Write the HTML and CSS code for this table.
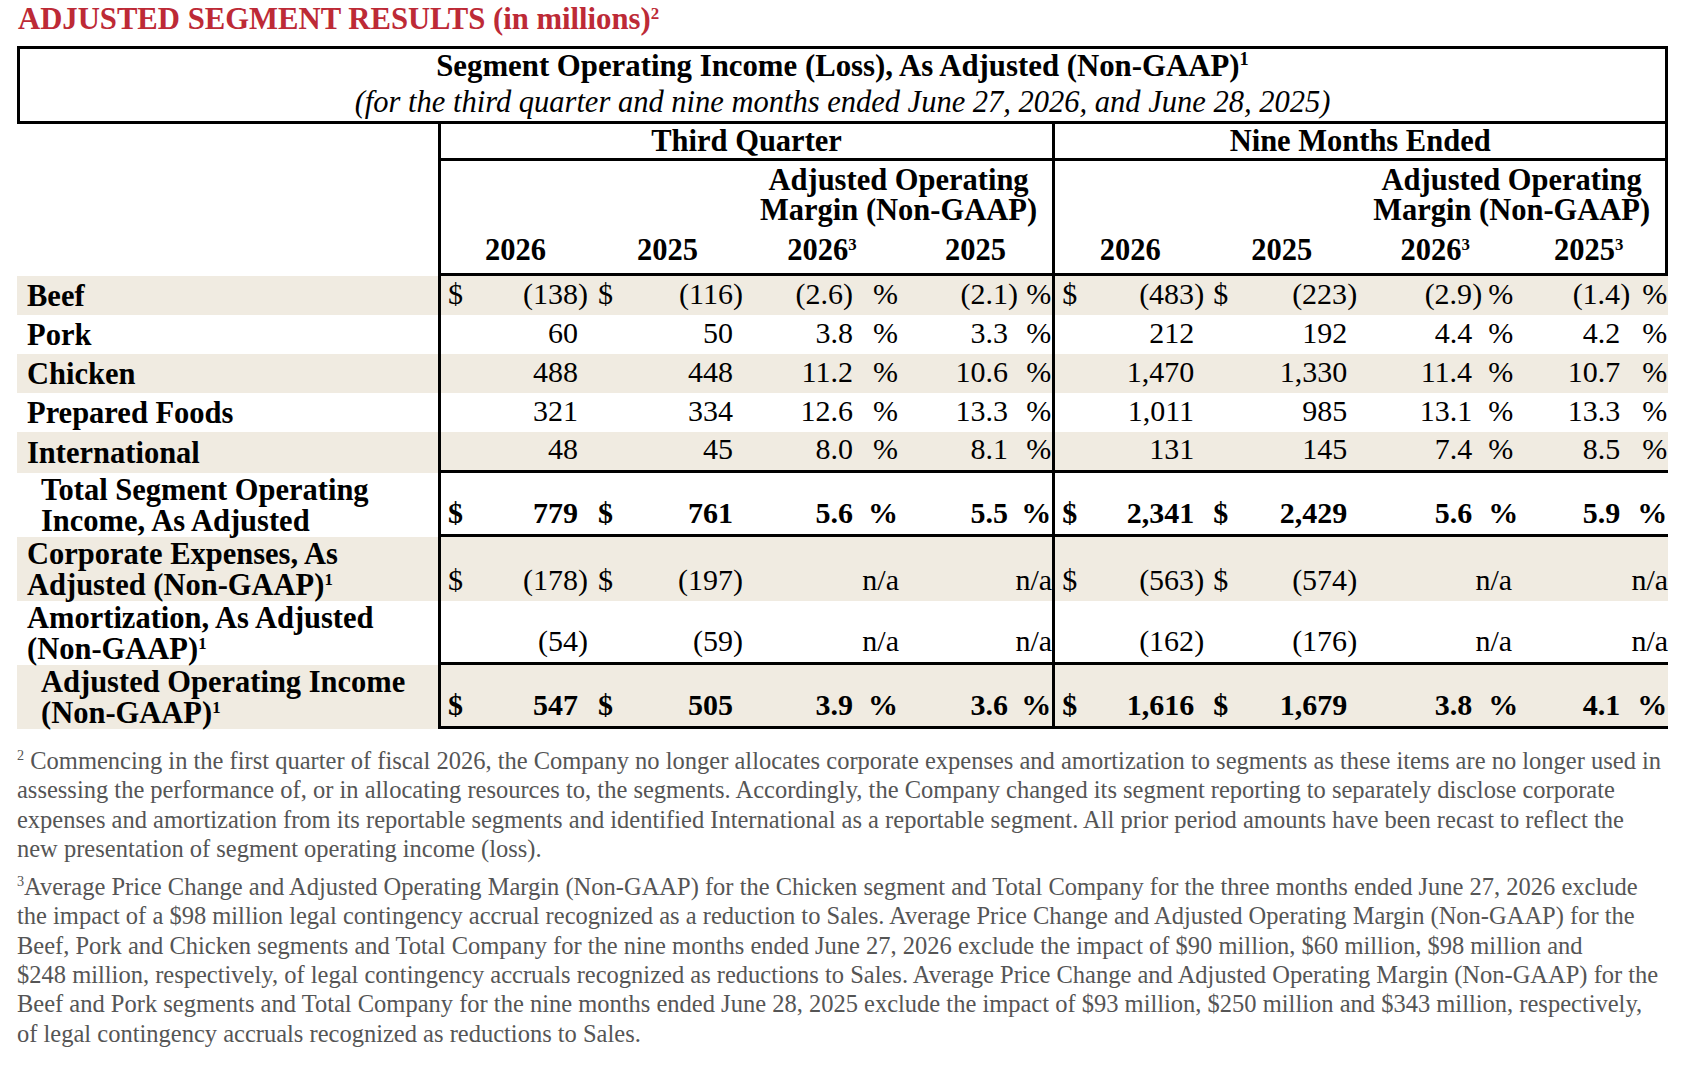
FILE: index.html
```html
<!DOCTYPE html>
<html lang="en">
<head>
    <meta charset="UTF-8">
    <title>Adjusted Segment Results</title>
    <link rel="stylesheet" href="styles.css">
</head>
<body>
<div class="page">
    <h1 class="title">ADJUSTED SEGMENT RESULTS (in millions)<sup>2</sup></h1>

    <div class="caption">
        <div class="caption-main">Segment Operating Income (Loss), As Adjusted (Non-GAAP)<sup>1</sup></div>
        <div class="caption-sub">(for the third quarter and nine months ended June 27, 2026, and June 28, 2025)</div>
    </div>

    <table class="results">
        <colgroup>
            <col><col><col><col><col><col><col><col><col><col><col><col><col>
            <col><col><col><col><col><col><col><col><col><col><col><col>
        </colgroup>
        <tr class="head-period rule">
            <td class="label"></td>
            <td class="split" colspan="12">Third Quarter</td>
            <td class="split edge" colspan="12">Nine Months Ended</td>
        </tr>
        <tr class="head-margin">
            <td class="label"></td>
            <td class="split" colspan="6"></td>
            <td colspan="6">Adjusted Operating<br>Margin (Non-GAAP)</td>
            <td class="split" colspan="6"></td>
            <td class="edge" colspan="6">Adjusted Operating<br>Margin (Non-GAAP)</td>
        </tr>
        <tr class="head-year rule">
            <td class="label"></td>
            <td class="split" colspan="3">2026</td>
            <td colspan="3">2025</td>
            <td colspan="3">2026<sup>3</sup></td>
            <td colspan="3">2025</td>
            <td class="split" colspan="3">2026</td>
            <td colspan="3">2025</td>
            <td colspan="3">2026<sup>3</sup></td>
            <td class="edge" colspan="3">2025<sup>3</sup></td>
        </tr>

        <tr class="shade">
            <td class="label">Beef</td>
            <td class="cur split">$</td><td class="num">(138</td><td class="par">)</td>
            <td class="cur">$</td><td class="num">(116</td><td class="par">)</td>
            <td class="num">(2.6)</td><td class="par"></td><td class="pct">%</td>
            <td class="num">(2.1</td><td class="par">)</td><td class="pct">%</td>
            <td class="cur split">$</td><td class="num">(483</td><td class="par">)</td>
            <td class="cur">$</td><td class="num">(223</td><td class="par">)</td>
            <td class="num">(2.9</td><td class="par">)</td><td class="pct">%</td>
            <td class="num">(1.4</td><td class="par">)</td><td class="pct">%</td>
        </tr>
        <tr>
            <td class="label">Pork</td>
            <td class="cur split"></td><td class="num">60</td><td class="par"></td>
            <td class="cur"></td><td class="num">50</td><td class="par"></td>
            <td class="num">3.8</td><td class="par"></td><td class="pct">%</td>
            <td class="num">3.3</td><td class="par"></td><td class="pct">%</td>
            <td class="cur split"></td><td class="num">212</td><td class="par"></td>
            <td class="cur"></td><td class="num">192</td><td class="par"></td>
            <td class="num">4.4</td><td class="par"></td><td class="pct">%</td>
            <td class="num">4.2</td><td class="par"></td><td class="pct">%</td>
        </tr>
        <tr class="shade">
            <td class="label">Chicken</td>
            <td class="cur split"></td><td class="num">488</td><td class="par"></td>
            <td class="cur"></td><td class="num">448</td><td class="par"></td>
            <td class="num">11.2</td><td class="par"></td><td class="pct">%</td>
            <td class="num">10.6</td><td class="par"></td><td class="pct">%</td>
            <td class="cur split"></td><td class="num">1,470</td><td class="par"></td>
            <td class="cur"></td><td class="num">1,330</td><td class="par"></td>
            <td class="num">11.4</td><td class="par"></td><td class="pct">%</td>
            <td class="num">10.7</td><td class="par"></td><td class="pct">%</td>
        </tr>
        <tr>
            <td class="label">Prepared Foods</td>
            <td class="cur split"></td><td class="num">321</td><td class="par"></td>
            <td class="cur"></td><td class="num">334</td><td class="par"></td>
            <td class="num">12.6</td><td class="par"></td><td class="pct">%</td>
            <td class="num">13.3</td><td class="par"></td><td class="pct">%</td>
            <td class="cur split"></td><td class="num">1,011</td><td class="par"></td>
            <td class="cur"></td><td class="num">985</td><td class="par"></td>
            <td class="num">13.1</td><td class="par"></td><td class="pct">%</td>
            <td class="num">13.3</td><td class="par"></td><td class="pct">%</td>
        </tr>
        <tr class="shade rule last-seg">
            <td class="label">International</td>
            <td class="cur split"></td><td class="num">48</td><td class="par"></td>
            <td class="cur"></td><td class="num">45</td><td class="par"></td>
            <td class="num">8.0</td><td class="par"></td><td class="pct">%</td>
            <td class="num">8.1</td><td class="par"></td><td class="pct">%</td>
            <td class="cur split"></td><td class="num">131</td><td class="par"></td>
            <td class="cur"></td><td class="num">145</td><td class="par"></td>
            <td class="num">7.4</td><td class="par"></td><td class="pct">%</td>
            <td class="num">8.5</td><td class="par"></td><td class="pct">%</td>
        </tr>

        <tr class="total rule tall">
            <td class="label indent">Total Segment Operating<br>Income, As Adjusted</td>
            <td class="cur split">$</td><td class="num">779</td><td class="par"></td>
            <td class="cur">$</td><td class="num">761</td><td class="par"></td>
            <td class="num">5.6</td><td class="par"></td><td class="pct">%</td>
            <td class="num">5.5</td><td class="par"></td><td class="pct">%</td>
            <td class="cur split">$</td><td class="num">2,341</td><td class="par"></td>
            <td class="cur">$</td><td class="num">2,429</td><td class="par"></td>
            <td class="num">5.6</td><td class="par"></td><td class="pct">%</td>
            <td class="num">5.9</td><td class="par"></td><td class="pct">%</td>
        </tr>
        <tr class="shade tall">
            <td class="label">Corporate Expenses, As<br>Adjusted (Non-GAAP)<sup>1</sup></td>
            <td class="cur split">$</td><td class="num">(178</td><td class="par">)</td>
            <td class="cur">$</td><td class="num">(197</td><td class="par">)</td>
            <td class="na" colspan="3">n/a</td>
            <td class="na" colspan="3">n/a</td>
            <td class="cur split">$</td><td class="num">(563</td><td class="par">)</td>
            <td class="cur">$</td><td class="num">(574</td><td class="par">)</td>
            <td class="na" colspan="3">n/a</td>
            <td class="na" colspan="3">n/a</td>
        </tr>
        <tr class="rule tall">
            <td class="label">Amortization, As Adjusted<br>(Non-GAAP)<sup>1</sup></td>
            <td class="cur split"></td><td class="num">(54</td><td class="par">)</td>
            <td class="cur"></td><td class="num">(59</td><td class="par">)</td>
            <td class="na" colspan="3">n/a</td>
            <td class="na" colspan="3">n/a</td>
            <td class="cur split"></td><td class="num">(162</td><td class="par">)</td>
            <td class="cur"></td><td class="num">(176</td><td class="par">)</td>
            <td class="na" colspan="3">n/a</td>
            <td class="na" colspan="3">n/a</td>
        </tr>
        <tr class="shade total rule tall">
            <td class="label indent">Adjusted Operating Income<br>(Non-GAAP)<sup>1</sup></td>
            <td class="cur split">$</td><td class="num">547</td><td class="par"></td>
            <td class="cur">$</td><td class="num">505</td><td class="par"></td>
            <td class="num">3.9</td><td class="par"></td><td class="pct">%</td>
            <td class="num">3.6</td><td class="par"></td><td class="pct">%</td>
            <td class="cur split">$</td><td class="num">1,616</td><td class="par"></td>
            <td class="cur">$</td><td class="num">1,679</td><td class="par"></td>
            <td class="num">3.8</td><td class="par"></td><td class="pct">%</td>
            <td class="num">4.1</td><td class="par"></td><td class="pct">%</td>
        </tr>
    </table>

    <div class="notes">
        <p><sup>2</sup> Commencing in the first quarter of fiscal 2026, the Company no longer allocates corporate expenses and amortization to segments as these items are no longer used in assessing the performance of, or in allocating resources to, the segments. Accordingly, the Company changed its segment reporting to separately disclose corporate expenses and amortization from its reportable segments and identified International as a reportable segment. All prior period amounts have been recast to reflect the new presentation of segment operating income (loss).</p>
        <p><sup>3</sup>Average Price Change and Adjusted Operating Margin (Non-GAAP) for the Chicken segment and Total Company for the three months ended June 27, 2026 exclude the impact of a $98&nbsp;million legal contingency accrual recognized as a reduction to Sales. Average Price Change and Adjusted Operating Margin (Non-GAAP) for the Beef, Pork and Chicken segments and Total Company for the nine months ended June 27, 2026 exclude the impact of $90&nbsp;million, $60&nbsp;million, $98&nbsp;million and $248&nbsp;million, respectively, of legal contingency accruals recognized as reductions to Sales. Average Price Change and Adjusted Operating Margin (Non-GAAP) for the Beef and Pork segments and Total Company for the nine months ended June 28, 2025 exclude the impact of $93&nbsp;million, $250&nbsp;million and $343&nbsp;million, respectively, of legal contingency accruals recognized as reductions to Sales.</p>
    </div>
</div>
</body>
</html>
```

FILE: styles.css
```css
* { margin: 0; padding: 0; }

body {
    font-family: "Liberation Serif", "Times New Roman", serif;
    color: #000;
    background: #fff;
}

.page { width: 1651px; padding-left: 17px; }

sup { font-size: 60%; line-height: 0; vertical-align: 0.6em; }

/* title */
.title {
    font-size: 30.7px; line-height: 34px; font-weight: bold;
    padding: 2px 0 0 1px;
    color: #bd2a36;
}
.title sup { font-size: 55%; }

/* caption box above the table */
.caption {
    margin-top: 10px;
    border: 3px solid #000;
    text-align: center;
}
.caption-main { font-size: 30.8px; font-weight: bold; line-height: 34px; }
.caption-sub { font-size: 30.5px; font-style: italic; line-height: 38px; }

/* results table */
.results {
    width: 1651px;
    table-layout: fixed;
    border-collapse: separate; border-spacing: 0;
    font-size: 30px;
}
.results col:nth-child(1) { width: 421px; }
/* third quarter */
.results col:nth-child(2) { width: 34px; }
.results col:nth-child(3) { width: 106px; }
.results col:nth-child(4) { width: 12px; }
.results col:nth-child(5) { width: 37px; }
.results col:nth-child(6) { width: 106px; }
.results col:nth-child(7) { width: 12px; }
.results col:nth-child(8) { width: 108px; }
.results col:nth-child(9) { width: 4px; }
.results col:nth-child(10) { width: 42px; }
.results col:nth-child(11) { width: 109px; }
.results col:nth-child(12) { width: 13px; }
.results col:nth-child(13) { width: 31px; }
/* nine months */
.results col:nth-child(14) { width: 35px; }
.results col:nth-child(15) { width: 107px; }
.results col:nth-child(16) { width: 11px; }
.results col:nth-child(17) { width: 38px; }
.results col:nth-child(18) { width: 104px; }
.results col:nth-child(19) { width: 11px; }
.results col:nth-child(20) { width: 114px; }
.results col:nth-child(21) { width: 16px; }
.results col:nth-child(22) { width: 24px; }
.results col:nth-child(23) { width: 108px; }
.results col:nth-child(24) { width: 14px; }
.results col:nth-child(25) { width: 34px; }

.results td {
    padding: 0 0 4px 0;
    line-height: 34px;
    vertical-align: bottom;
    white-space: nowrap;
}

.results tr { height: 39px; }
.results tr.head-period { height: 36px; }
.results tr.head-margin { height: 65px; }
.results tr.head-year { height: 50px; }
.results tr.last-seg { height: 40px; }
.results tr.tall { height: 64px; }

.results .split { border-left: 3px solid #000; }
.results .edge { border-right: 3px solid #000; }
.results tr.rule td:not(.label) { border-bottom: 3px solid #000; }

.results tr.shade td { background: #f0ebe1; }

/* header rows */
.head-period td, .head-margin td, .head-year td { font-size: 30.5px; font-weight: bold; text-align: center; }
.head-period td { vertical-align: middle; padding: 0; }
.head-margin td { line-height: 30px; padding: 0 0 1px 0; }
.head-year td { padding-bottom: 6px; }
.results td sup { font-size: 55%; }

/* row labels */
.results td.label {
    font-size: 30.5px; font-weight: bold; text-align: left;
    padding: 0 0 0 10px;
    vertical-align: middle;
}
.results td.indent { padding-left: 24px; }
.results tr.tall td.label { line-height: 30.5px; padding-top: 1px; }

/* values */
.cur { text-align: left; text-indent: 8px; }
.cur.split { text-indent: 7px; }
.num { text-align: right; }
.par { text-align: left; }
.pct { text-align: right; padding-right: 1px !important; }
.na { text-align: right; }
.total td { font-weight: bold; }

/* footnotes */
.notes { width: 1648px; margin-top: 17px; color: #555; font-size: 24.5px; line-height: 29.3px; }
.notes p { margin-bottom: 9px; }
.notes sup { font-size: 58%; }
```
